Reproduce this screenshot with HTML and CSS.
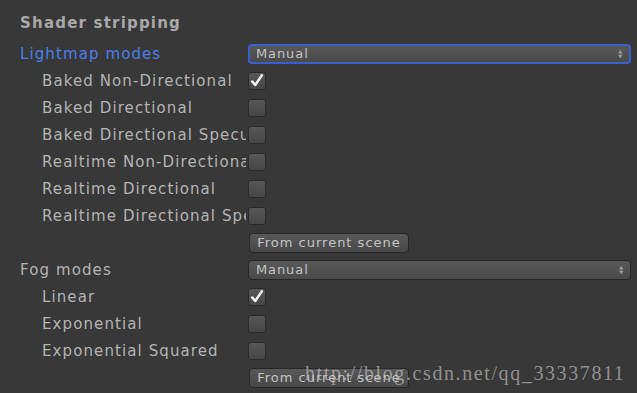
FILE: index.html
```html
<!DOCTYPE html>
<html>
<head>
  <title>Graphics Settings</title>
  <link rel="stylesheet" href="styles.css">
</head>
<body>
  <div class="inspector">
    <h3 class="section-title">Shader stripping</h3>

    <div class="row">
      <label class="field-label active">Lightmap modes</label>
      <div class="popup focused"><span>Manual</span><span class="arrows">&#9650;<br>&#9660;</span></div>
    </div>
    <div class="row">
      <label class="field-label sub">Baked Non-Directional</label>
      <div class="check"><svg viewBox="0 0 18 18" width="16" height="16"><path d="M3.5 9.5 L7 13.5 L14.5 2.5" /></svg></div>
    </div>
    <div class="row">
      <label class="field-label sub">Baked Directional</label>
      <div class="check"></div>
    </div>
    <div class="row">
      <label class="field-label sub">Baked Directional Specular</label>
      <div class="check"></div>
    </div>
    <div class="row">
      <label class="field-label sub">Realtime Non-Directional</label>
      <div class="check"></div>
    </div>
    <div class="row">
      <label class="field-label sub">Realtime Directional</label>
      <div class="check"></div>
    </div>
    <div class="row">
      <label class="field-label sub">Realtime Directional Specular</label>
      <div class="check"></div>
    </div>
    <div class="row">
      <span></span>
      <button class="mini-btn">From current scene</button>
    </div>

    <div class="row">
      <label class="field-label">Fog modes</label>
      <div class="popup"><span>Manual</span><span class="arrows">&#9650;<br>&#9660;</span></div>
    </div>
    <div class="row">
      <label class="field-label sub">Linear</label>
      <div class="check"><svg viewBox="0 0 18 18" width="16" height="16"><path d="M3.5 9.5 L7 13.5 L14.5 2.5" /></svg></div>
    </div>
    <div class="row">
      <label class="field-label sub">Exponential</label>
      <div class="check"></div>
    </div>
    <div class="row">
      <label class="field-label sub">Exponential Squared</label>
      <div class="check"></div>
    </div>
    <div class="row">
      <span></span>
      <button class="mini-btn">From current scene</button>
    </div>
  </div>

  <div class="watermark">http://blog.csdn.net/qq_33337811</div>
</body>
</html>
```

FILE: styles.css
```css
body {
  margin: 0;
  background-color: #383838;
  font-family: "DejaVu Sans", sans-serif;
  color: #b4b4b4;
  overflow: hidden;
}

.inspector {
  padding: 10px 6px 0 20px;
}

.section-title {
  margin: 0 0 3px 0;
  height: 27px;
  line-height: 27px;
  font-size: 15px;
  font-weight: bold;
  letter-spacing: 1.2px;
  color: #a8a8a8;
}

.row {
  display: grid;
  grid-template-columns: 228px 1fr;
  align-items: center;
  height: 27px;
}

.field-label {
  width: 226px;
  font-size: 15px;
  white-space: nowrap;
  overflow: hidden;
  letter-spacing: 1.1px;
}

.field-label.active {
  color: #4c7eea;
}

.field-label.sub {
  padding-left: 22px;
  box-sizing: border-box;
}

.popup {
  height: 20px;
  box-sizing: border-box;
  display: flex;
  align-items: center;
  justify-content: space-between;
  padding: 0 6px 0 7px;
  border: 1px solid #262626;
  border-radius: 4px;
  background: linear-gradient(#585858, #4a4a4a);
  color: #c2c2c2;
  font-size: 13px;
  letter-spacing: 0.9px;
}

.popup.focused {
  border: 2px solid #3a5fd0;
  padding-left: 6px;
}

.popup .arrows {
  font-size: 5px;
  line-height: 5px;
  color: #a0a0a0;
  text-align: center;
}

.check {
  width: 18px;
  height: 18px;
  box-sizing: border-box;
  border: 1px solid #2a2a2a;
  border-radius: 3px;
  background: linear-gradient(#575757, #464646);
  display: flex;
  align-items: center;
  justify-content: center;
}

.check svg path {
  fill: none;
  stroke: #f2f2f2;
  stroke-width: 2.8;
  stroke-linecap: round;
  stroke-linejoin: round;
}

.mini-btn {
  justify-self: start;
  margin-left: 1px;
  width: 160px;
  height: 20px;
  padding: 0;
  border: 1px solid #272727;
  border-radius: 4px;
  background: linear-gradient(#585858, #484848);
  color: #c4c4c4;
  font-family: "DejaVu Sans", sans-serif;
  font-size: 13px;
  letter-spacing: 1px;
}

.watermark {
  position: absolute;
  left: 305px;
  top: 362px;
  font-family: "Liberation Serif", serif;
  font-size: 20px;
  color: rgba(205, 205, 205, 0.6);
  letter-spacing: 1.6px;
}
```
